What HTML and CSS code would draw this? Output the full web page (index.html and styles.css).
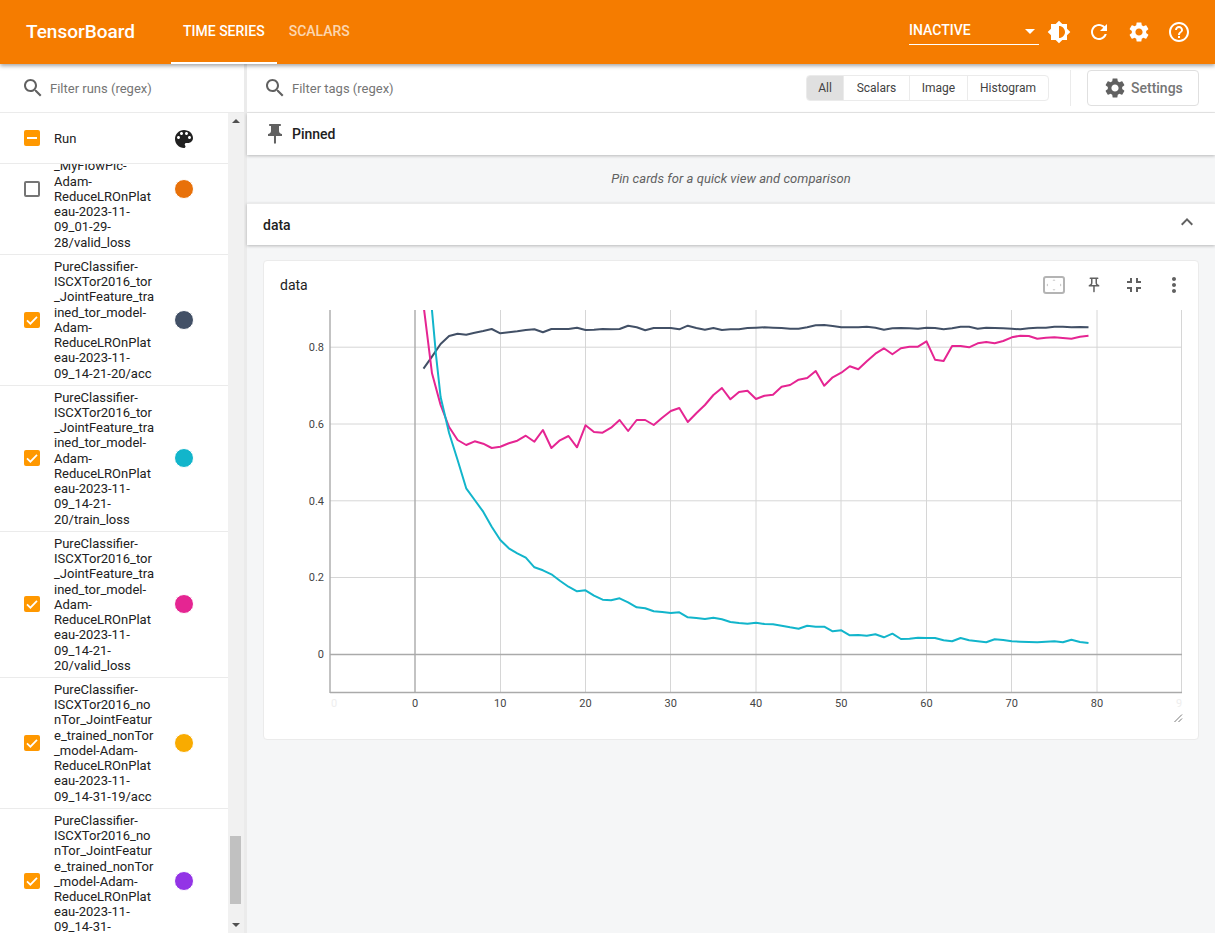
FILE: index.html
```html
<!DOCTYPE html>
<html lang="en">
<head>
<meta charset="utf-8">
<title>TensorBoard</title>
<link rel="stylesheet" href="styles.css">
</head>
<body>
<div class="app">
  <header class="topbar">
    <div class="brand">TensorBoard</div>
    <nav class="tabs">
      <div class="tab tab-active">TIME SERIES</div>
      <div class="tab">SCALARS</div>
    </nav>
    <div class="topbar-right">
      <div class="picker"><span>INACTIVE</span><i class="picker-arrow"></i></div>
      <div class="top-icon"><svg viewBox="0 0 24 24"><path d="M20 15.31L23.31 12 20 8.69V4h-4.69L12 .69 8.69 4H4v4.69L.69 12 4 15.31V20h4.69L12 23.31 15.31 20H20v-4.69zM12 18V6c3.31 0 6 2.69 6 6s-2.69 6-6 6z"/></svg></div>
      <div class="top-icon"><svg viewBox="0 0 24 24"><path d="M17.65 6.35C16.2 4.9 14.21 4 12 4c-4.42 0-7.99 3.58-7.99 8s3.57 8 7.99 8c3.73 0 6.84-2.55 7.73-6h-2.08c-.82 2.33-3.04 4-5.65 4-3.31 0-6-2.69-6-6s2.69-6 6-6c1.66 0 3.14.69 4.22 1.78L13 11h7V4l-2.35 2.35z"/></svg></div>
      <div class="top-icon"><svg viewBox="0 0 24 24"><path d="M19.14 12.94c.04-.3.06-.61.06-.94 0-.32-.02-.64-.07-.94l2.03-1.58c.18-.14.23-.41.12-.61l-1.92-3.32c-.12-.22-.37-.29-.59-.22l-2.39.96c-.5-.38-1.03-.7-1.62-.94l-.36-2.54c-.04-.24-.24-.41-.48-.41h-3.84c-.24 0-.43.17-.47.41l-.36 2.54c-.59.24-1.13.57-1.62.94l-2.39-.96c-.22-.08-.47 0-.59.22L2.74 8.87c-.12.21-.08.47.12.61l2.03 1.58c-.05.3-.09.63-.09.94s.02.64.07.94l-2.03 1.58c-.18.14-.23.41-.12.61l1.92 3.32c.12.22.37.29.59.22l2.39-.96c.5.38 1.03.7 1.62.94l.36 2.54c.05.24.24.41.48.41h3.84c.24 0 .44-.17.47-.41l.36-2.54c.59-.24 1.13-.56 1.62-.94l2.39.96c.22.08.47 0 .59-.22l1.92-3.32c.12-.22.07-.47-.12-.61l-2.01-1.58zM12 15.6c-1.98 0-3.6-1.62-3.6-3.6s1.62-3.6 3.6-3.6 3.6 1.62 3.6 3.6-1.62 3.6-3.6 3.6z"/></svg></div>
      <div class="top-icon"><svg viewBox="0 0 24 24"><path d="M11 18h2v-2h-2v2zm1-16C6.48 2 2 6.48 2 12s4.48 10 10 10 10-4.48 10-10S17.52 2 12 2zm0 18c-4.41 0-8-3.59-8-8s3.59-8 8-8 8 3.59 8 8-3.59 8-8 8zm0-14c-2.21 0-4 1.79-4 4h2c0-1.1.9-2 2-2s2 .9 2 2c0 2-3 1.75-3 5h2c0-2.25 3-2.5 3-5 0-2.21-1.79-4-4-4z"/></svg></div>
    </div>
  </header>

  <div class="body">
    <aside class="sidebar">
      <div class="filter filter-runs">
        <svg class="search-icon" viewBox="0 0 24 24"><path d="M15.5 14h-.79l-.28-.27C15.41 12.59 16 11.11 16 9.5 16 5.91 13.09 3 9.5 3S3 5.91 3 9.5 5.91 16 9.5 16c1.61 0 3.09-.59 4.23-1.57l.27.28v.79l5 4.99L20.49 19l-4.99-5zm-6 0C7.01 14 5 11.99 5 9.5S7.01 5 9.5 5 14 7.01 14 9.5 11.99 14 9.5 14z"/></svg>
        <span class="filter-text">Filter runs (regex)</span>
      </div>
      <div class="runs">
        <div class="runs-list">
          <div class="run run-head">
            <span class="check check-on"><i class="dash"></i></span>
            <span class="run-name">Run</span>
            <svg class="palette" viewBox="0 0 24 24"><path d="M12 3c-4.97 0-9 4.03-9 9s4.03 9 9 9c.83 0 1.5-.67 1.5-1.5 0-.39-.15-.74-.39-1.01-.23-.26-.38-.61-.38-.99 0-.83.67-1.5 1.5-1.5H16c2.76 0 5-2.24 5-5 0-4.42-4.03-8-9-8zm-5.5 9c-.83 0-1.5-.67-1.5-1.5S5.67 9 6.5 9 8 9.67 8 10.5 7.33 12 6.5 12zm3-4C8.67 8 8 7.33 8 6.5S8.67 5 9.5 5s1.5.67 1.5 1.5S10.33 8 9.5 8zm5 0c-.83 0-1.5-.67-1.5-1.5S13.67 5 14.5 5s1.5.67 1.5 1.5S15.33 8 14.5 8zm3 4c-.83 0-1.5-.67-1.5-1.5S16.67 9 17.5 9s1.5.67 1.5 1.5-.67 1.5-1.5 1.5z"/></svg>
          </div>
          <div class="runs-scroll">
            <div class="run run-scrolled">
              <span class="check"></span>
              <span class="run-name">PureClassifier-ISCXTor2016_tor_MyFlowPic-Adam-ReduceLROnPlateau-2023-11-09_01-29-28/valid_loss</span>
              <span class="swatch swatch-orange"></span>
            </div>
            <div class="run">
              <span class="check check-on"><svg viewBox="0 0 16 16"><path class="tick" d="M3 8.3l3.4 3.4L13 4.8"/></svg></span>
              <span class="run-name">PureClassifier-ISCXTor2016_tor_JointFeature_trained_tor_model-Adam-ReduceLROnPlateau-2023-11-09_14-21-20/acc</span>
              <span class="swatch swatch-slate"></span>
            </div>
            <div class="run">
              <span class="check check-on"><svg viewBox="0 0 16 16"><path class="tick" d="M3 8.3l3.4 3.4L13 4.8"/></svg></span>
              <span class="run-name">PureClassifier-ISCXTor2016_tor_JointFeature_trained_tor_model-Adam-ReduceLROnPlateau-2023-11-09_14-21-20/train_loss</span>
              <span class="swatch swatch-teal"></span>
            </div>
            <div class="run">
              <span class="check check-on"><svg viewBox="0 0 16 16"><path class="tick" d="M3 8.3l3.4 3.4L13 4.8"/></svg></span>
              <span class="run-name">PureClassifier-ISCXTor2016_tor_JointFeature_trained_tor_model-Adam-ReduceLROnPlateau-2023-11-09_14-21-20/valid_loss</span>
              <span class="swatch swatch-pink"></span>
            </div>
            <div class="run">
              <span class="check check-on"><svg viewBox="0 0 16 16"><path class="tick" d="M3 8.3l3.4 3.4L13 4.8"/></svg></span>
              <span class="run-name">PureClassifier-ISCXTor2016_nonTor_JointFeature_trained_nonTor_model-Adam-ReduceLROnPlateau-2023-11-09_14-31-19/acc</span>
              <span class="swatch swatch-yellow"></span>
            </div>
            <div class="run">
              <span class="check check-on"><svg viewBox="0 0 16 16"><path class="tick" d="M3 8.3l3.4 3.4L13 4.8"/></svg></span>
              <span class="run-name">PureClassifier-ISCXTor2016_nonTor_JointFeature_trained_nonTor_model-Adam-ReduceLROnPlateau-2023-11-09_14-31-19/train_loss</span>
              <span class="swatch swatch-purple"></span>
            </div>
          </div>
        </div>
        <div class="scrollbar">
          <i class="sb-up"></i>
          <div class="sb-space"></div>
          <div class="sb-thumb"></div>
          <i class="sb-down"></i>
        </div>
      </div>
    </aside>

    <main class="main">
      <div class="toolbar">
        <div class="filter filter-tags">
          <svg class="search-icon" viewBox="0 0 24 24"><path d="M15.5 14h-.79l-.28-.27C15.41 12.59 16 11.11 16 9.5 16 5.91 13.09 3 9.5 3S3 5.91 3 9.5 5.91 16 9.5 16c1.61 0 3.09-.59 4.23-1.57l.27.28v.79l5 4.99L20.49 19l-4.99-5zm-6 0C7.01 14 5 11.99 5 9.5S7.01 5 9.5 5 14 7.01 14 9.5 11.99 14 9.5 14z"/></svg>
          <span class="filter-text">Filter tags (regex)</span>
        </div>
        <div class="segments">
          <div class="segment segment-on">All</div>
          <div class="segment seg-scalars">Scalars</div>
          <div class="segment seg-image">Image</div>
          <div class="segment seg-hist">Histogram</div>
        </div>
        <div class="tool-divider"></div>
        <div class="settings-btn">
          <svg viewBox="0 0 24 24"><path d="M19.14 12.94c.04-.3.06-.61.06-.94 0-.32-.02-.64-.07-.94l2.03-1.58c.18-.14.23-.41.12-.61l-1.92-3.32c-.12-.22-.37-.29-.59-.22l-2.39.96c-.5-.38-1.03-.7-1.62-.94l-.36-2.54c-.04-.24-.24-.41-.48-.41h-3.84c-.24 0-.43.17-.47.41l-.36 2.54c-.59.24-1.13.57-1.62.94l-2.39-.96c-.22-.08-.47 0-.59.22L2.74 8.87c-.12.21-.08.47.12.61l2.03 1.58c-.05.3-.09.63-.09.94s.02.64.07.94l-2.03 1.58c-.18.14-.23.41-.12.61l1.92 3.32c.12.22.37.29.59.22l2.39-.96c.5.38 1.03.7 1.62.94l.36 2.54c.05.24.24.41.48.41h3.84c.24 0 .44-.17.47-.41l.36-2.54c.59-.24 1.13-.56 1.62-.94l2.39.96c.22.08.47 0 .59-.22l1.92-3.32c.12-.22.07-.47-.12-.61l-2.01-1.58zM12 15.6c-1.98 0-3.6-1.62-3.6-3.6s1.62-3.6 3.6-3.6 3.6 1.62 3.6 3.6-1.62 3.6-3.6 3.6z"/></svg>
          <span>Settings</span>
        </div>
      </div>

      <section class="bar bar-pinned">
        <svg class="pin-big" viewBox="0 0 24 24"><path d="M16 9V4h1c.55 0 1-.45 1-1s-.45-1-1-1H7c-.55 0-1 .45-1 1s.45 1 1 1h1v5c0 1.66-1.34 3-3 3v2h5.97v7l1 1 1-1v-7H19v-2c-1.66 0-3-1.34-3-3z"/></svg>
        <span class="bar-title">Pinned</span>
      </section>
      <div class="pin-hint">Pin cards for a quick view and comparison</div>
      <section class="bar bar-data">
        <span class="bar-title">data</span>
        <svg class="chevron" viewBox="0 0 24 24"><path d="M12 8l-6 6 1.41 1.41L12 10.83l4.59 4.58L18 14z"/></svg>
      </section>

      <article class="card">
        <div class="card-head">
          <span class="card-title">data</span>
          <div class="card-actions">
            <div class="card-btn"><svg class="fit-icon" viewBox="0 0 22 18"><rect class="fit-frame" x="1" y="1" width="20" height="16" rx="2"/><path class="fit-arrows" d="M11 3.2l1.5 1.6h-3zM11 14.8l1.5-1.6h-3zM3.4 9l1.6-1.5v3zM18.6 9L17 7.5v3z"/></svg></div>
            <div class="card-btn"><svg class="pin-small" viewBox="0 0 24 24"><path d="M14 4v5c0 1.12.37 2.16 1 3H9c.65-.86 1-1.9 1-3V4h4m3-2H7c-.55 0-1 .45-1 1s.45 1 1 1h1v5c0 1.66-1.34 3-3 3v2h5.97v7l1 1 1-1v-7H19v-2c-1.66 0-3-1.34-3-3V4h1c.55 0 1-.45 1-1s-.45-1-1-1z"/></svg></div>
            <div class="card-btn"><svg class="act-icon" viewBox="0 0 24 24"><path d="M5 16h3v3h2v-5H5v2zm3-8H5v2h5V5H8v3zm6 11h2v-3h3v-2h-5v5zm2-11V5h-2v5h5V8h-3z"/></svg></div>
            <div class="card-btn"><svg class="act-icon" viewBox="0 0 24 24"><path d="M12 8c1.1 0 2-.9 2-2s-.9-2-2-2-2 .9-2 2 .9 2 2 2zm0 2c-1.1 0-2 .9-2 2s.9 2 2 2 2-.9 2-2-.9-2-2-2zm0 6c-1.1 0-2 .9-2 2s.9 2 2 2 2-.9 2-2-.9-2-2-2z"/></svg></div>
          </div>
        </div>
        <svg class="chart" viewBox="264 306 934 433">
          <defs><clipPath id="plot"><rect x="330" y="310" width="852" height="383"/></clipPath></defs>
          <g class="grid">
            <path d="M500.5 310V693M585.5 310V693M670.5 310V693M756 310V693M841 310V693M926.5 310V693M1011.5 310V693M1097 310V693M1181.5 310V693"/>
            <path d="M330 347.2H1182M330 424H1182M330 500.8H1182M330 577.5H1182"/>
          </g>
          <g class="axis">
            <path d="M330 310V693M330 692.5H1182M415 310V693M330 654.5H1182"/>
          </g>
          <g class="ticks">
            <text class="t-y" x="324" y="351">0.8</text>
            <text class="t-y" x="324" y="428">0.6</text>
            <text class="t-y" x="324" y="505">0.4</text>
            <text class="t-y" x="324" y="581">0.2</text>
            <text class="t-y" x="324" y="658">0</text>
            <text class="t-x t-faint" x="334" y="707">0</text>
            <text class="t-x" x="415" y="707">0</text>
            <text class="t-x" x="500.3" y="707">10</text>
            <text class="t-x" x="585.5" y="707">20</text>
            <text class="t-x" x="670.8" y="707">30</text>
            <text class="t-x" x="756" y="707">40</text>
            <text class="t-x" x="841.2" y="707">50</text>
            <text class="t-x" x="926.5" y="707">60</text>
            <text class="t-x" x="1011.8" y="707">70</text>
            <text class="t-x" x="1097" y="707">80</text>
            <text class="t-x t-faint" x="1179" y="707">9</text>
          </g>
          <g clip-path="url(#plot)">
            <polyline class="line line-slate" points="423.5,368.7 432,356.7 440.6,344 449.1,336 457.6,333.7 466.2,334.7 474.7,332.7 483.2,331 491.7,329 500.3,333.3 508.8,332.3 517.3,331.3 525.8,330 534.4,329.3 542.9,332.3 551.4,329 559.9,329 568.5,329 577,327.7 585.5,330 594,329.7 602.6,329 611.1,329.3 619.6,329 628.1,325.7 636.7,327.3 645.2,330.3 653.7,328 662.2,328 670.8,328 679.3,329.3 687.8,325.7 696.3,328 704.9,329.7 713.4,328 721.9,330 730.4,329.3 739,329.3 747.5,328 756,327.7 764.5,327.3 773,327.7 781.6,328 790.1,328.7 798.6,328.7 807.2,327.3 815.7,325.3 824.2,325 832.7,326 841.3,327.3 849.8,327.3 858.3,327.3 866.8,326.7 875.4,327.7 883.9,329.7 892.4,328.3 900.9,328 909.5,328.3 918,328.7 926.5,327.7 935,328 943.6,329.3 952.1,328.3 960.6,326.7 969.1,326.7 977.7,328.7 986.2,327.7 994.7,328 1003.2,328.3 1011.8,328.7 1020.3,329.3 1028.8,328.3 1037.3,327.7 1045.9,327.7 1054.4,326.7 1062.9,326.7 1071.4,327.3 1080,327 1088.5,327.3"/>
            <polyline class="line line-pink" points="423.5,305 432,373.3 440.6,405 449.1,427 457.6,440 466.2,445 474.7,441.3 483.2,443.7 491.7,448 500.3,446.7 508.8,443.3 517.3,440.7 525.8,435.7 534.4,441.7 542.9,430 551.4,448 559.9,440.3 568.5,436 577,447.3 585.5,425.3 594,432 602.6,432.7 611.1,427.7 619.6,420 628.1,431 636.7,420 645.2,420 653.7,425 662.2,417.7 670.8,411 679.3,408 687.8,422 696.3,413.3 704.9,405 713.4,395 721.9,388 730.4,399.3 739,392 747.5,390.7 756,399 764.5,395.7 773,394.7 781.6,386.7 790.1,385 798.6,379.7 807.2,378 815.7,371 824.2,385.7 832.7,377.3 841.3,372.7 849.8,366.3 858.3,369.3 866.8,361.3 875.4,353.7 883.9,348.3 892.4,354.3 900.9,348.3 909.5,346.7 918,346.7 926.5,341.3 935,359.7 943.6,361 952.1,346 960.6,346 969.1,347.3 977.7,343.3 986.2,342 994.7,343.3 1003.2,341 1011.8,337.3 1020.3,335.7 1028.8,336 1037.3,338.7 1045.9,337.7 1054.4,337.3 1062.9,338 1071.4,338.7 1080,336.7 1088.5,335.7"/>
            <polyline class="line line-teal" points="431.5,305 436,355 440.6,397 449.1,433 457.6,460 466.2,488.3 474.7,500 483.2,511.7 491.7,526.7 500.3,540 508.8,548.3 517.3,553.3 525.8,557.7 534.4,567.3 542.9,570.3 551.4,574.3 559.9,580.7 568.5,586.7 577,591.3 585.5,590.3 594,595.7 602.6,599.7 611.1,600.3 619.6,598.3 628.1,602.3 636.7,607.3 645.2,608.3 653.7,611.3 662.2,612 670.8,613 679.3,612.3 687.8,617.3 696.3,618 704.9,619 713.4,617.7 721.9,619.3 730.4,622 739,623 747.5,623.7 756,622.7 764.5,624 773,624.3 781.6,625.7 790.1,627.3 798.6,628.7 807.2,625.7 815.7,626.7 824.2,626.7 832.7,631.3 841.3,630.3 849.8,635.3 858.3,635 866.8,635.7 875.4,634.3 883.9,637.3 892.4,633.7 900.9,639 909.5,638.7 918,637.7 926.5,638 935,638 943.6,640.3 952.1,641.3 960.6,638 969.1,640.3 977.7,641.3 986.2,642.3 994.7,639.3 1003.2,640 1011.8,641.3 1020.3,641.7 1028.8,642 1037.3,642.3 1045.9,641.8 1054.4,641.3 1062.9,642.3 1071.4,639.7 1080,642 1088.5,643"/>
          </g>
          <path class="resize" d="M1174.5 722L1182 714.5M1178.5 722L1182 718.5"/>
        </svg>
      </article>
    </main>
  </div>
</div>
</body>
</html>
```

FILE: styles.css
```css
* { box-sizing: border-box; }
html, body { margin: 0; height: 100%; overflow: hidden; }
body { font-family: Roboto, "Noto Sans", sans-serif; color: #212121; background: #fff; }
svg { display: block; }

.app { height: 933px; display: flex; flex-direction: column; }

/* top bar */
.topbar { height: 64px; flex: none; background: #f57c00; color: #fff; display: flex; align-items: stretch; padding-left: 26px; padding-right: 16px; position: relative; z-index: 3; box-shadow: 0 2px 4px rgba(0,0,0,.35); }
.brand { font-size: 19px; font-weight: 500; line-height: 64px; width: 145px; }
.tabs { display: flex; }
.tab { padding: 0 12px; font-size: 14px; font-weight: 500; line-height: 63px; color: rgba(255,255,255,.7); }
.tab-active { color: #fff; border-bottom: 2px solid #fff; }
.topbar-right { margin-left: auto; display: flex; align-items: center; }
.picker { width: 130px; height: 29px; margin-top: -4px; border-bottom: 1px solid #fff; display: flex; align-items: center; justify-content: space-between; font-size: 14px; font-weight: 500; padding: 1px 4px 0 0; }
.picker-arrow { width: 0; height: 0; border-left: 5px solid transparent; border-right: 5px solid transparent; border-top: 5px solid #fff; margin-top: 3px; }
.top-icon { width: 40px; height: 40px; display: flex; align-items: center; justify-content: center; }
.top-icon svg { width: 24px; height: 24px; fill: #fff; }

.body { flex: 1; min-height: 0; display: flex; }

/* sidebar */
.sidebar { width: 244px; flex: none; display: flex; flex-direction: column; background: #fff; }
.filter { height: 49px; flex: none; display: flex; align-items: center; border-bottom: 1px solid #ebebeb; }
.filter-runs { padding-left: 21px; }
.search-icon { width: 24px; height: 24px; fill: #616161; margin-right: 5px; flex: none; }
.filter-text { font-size: 13px; color: #757575; }
.runs { flex: 1; min-height: 0; display: flex; }
.runs-list { width: 228px; display: flex; flex-direction: column; min-height: 0; }
.run-head { height: 51px; flex: none; line-height: normal; }
.runs-scroll { flex: 1; min-height: 0; overflow: hidden; }
.run { display: flex; align-items: center; padding: 4px 0 4px 24px; border-bottom: 1px solid #ebebeb; font-size: 13px; line-height: 15.23px; }
.run-head.run { line-height: 17px; }
.run-scrolled { margin-top: -40px; }
.check { width: 16px; height: 16px; border: 2px solid #757575; border-radius: 2px; flex: none; display: flex; align-items: center; justify-content: center; margin-right: 14px; }
.check-on { background: #ff9800; border: 0; }
.check-on svg { width: 16px; height: 16px; }
.tick { fill: none; stroke: #fff; stroke-width: 1.7; }
.dash { width: 10px; height: 2px; background: #fff; }
.run-name { width: 102px; flex: none; overflow-wrap: anywhere; }
.palette { width: 24px; height: 24px; fill: #212121; margin: 1px 0 0 16px; }
.swatch { width: 20px; height: 20px; border: 1px solid #fff; border-radius: 50%; margin-left: 18px; flex: none; }
.swatch-orange { background: #e8710a; }
.swatch-slate { background: #425066; }
.swatch-teal { background: #12b5cb; }
.swatch-pink { background: #e52592; }
.swatch-yellow { background: #f9ab00; }
.swatch-purple { background: #9334e6; }

/* fake scrollbar */
.scrollbar { width: 16px; flex: none; background: #f1f1f1; display: flex; flex-direction: column; align-items: center; padding: 6px 0; }
.sb-up { width: 0; height: 0; border-left: 4px solid transparent; border-right: 4px solid transparent; border-bottom: 4px solid #505050; }
.sb-down { width: 0; height: 0; border-left: 4px solid transparent; border-right: 4px solid transparent; border-top: 4px solid #505050; margin-top: 19px; }
.sb-space { flex: 1; }
.sb-thumb { width: 11px; height: 68px; margin-right: 1px; background: #c1c1c1; }

/* main */
.main { flex: 1; min-width: 0; margin-left: 3px; background: #f5f6f7; display: flex; flex-direction: column; box-shadow: -3px 0 0 #ebebeb; }
.toolbar { height: 49px; flex: none; background: #fff; border-bottom: 1px solid #ebebeb; display: flex; align-items: center; padding-right: 16px; }
.filter-tags { flex: 1; height: 48px; border: 0; padding-left: 16px; }
.segments { display: flex; height: 26px; border: 1px solid #ebebeb; border-radius: 4px; overflow: hidden; font-size: 12px; }
.segment { display: flex; align-items: center; justify-content: center; border-left: 1px solid #ebebeb; color: #424242; }
.segment-on { width: 36px; background: #e0e0e0; border-left: 0; }
.seg-scalars { width: 66px; }
.seg-image { width: 58px; }
.seg-hist { width: 81px; }
.tool-divider { width: 1px; height: 36px; background: #ebebeb; margin: 0 16px 0 21px; }
.settings-btn { width: 112px; height: 36px; border: 1px solid #e0e0e0; border-radius: 4px; display: flex; align-items: center; padding-left: 15px; font-size: 14px; font-weight: 500; color: #757575; }
.settings-btn svg { width: 24px; height: 24px; fill: #616161; margin-right: 4px; }

.bar { background: #fff; display: flex; align-items: center; flex: none; box-shadow: 0 1px 3px rgba(0,0,0,.25); }
.bar-pinned { height: 42px; padding-left: 16px; }
.pin-big { width: 24px; height: 24px; fill: #616161; margin-right: 5px; }
.bar-title { font-size: 14px; font-weight: 500; color: #212121; }
.pin-hint { height: 48px; flex: none; display: flex; align-items: center; justify-content: center; padding-bottom: 2px; font-size: 13px; letter-spacing: .05px; font-style: italic; color: #616161; }
.bar-data { height: 42px; padding: 0 16px; justify-content: space-between; border-top: 1px solid #ebebeb; }
.chevron { width: 24px; height: 24px; fill: #616161; margin-top: -5px; }

.card { margin: 15px 16px 0; height: 480px; background: #fff; border: 1px solid #ebebeb; border-radius: 4px; flex: none; }
.card-head { height: 45px; display: flex; align-items: center; justify-content: space-between; padding: 0 4px 0 16px; }
.card-title { font-size: 14px; color: #212121; margin-top: 3px; }
.card-actions { display: flex; margin-top: 3px; }
.card-btn { width: 40px; height: 40px; display: flex; align-items: center; justify-content: center; }
.fit-icon { width: 22px; height: 18px; }
.fit-frame { fill: none; stroke: #b4b4b4; stroke-width: 2; }
.fit-arrows { fill: #c8c8c8; }
.pin-small { width: 18px; height: 18px; fill: #616161; }
.act-icon { width: 24px; height: 24px; fill: #616161; }

/* chart */
.chart { width: 934px; height: 433px; font-size: 11px; }
.grid path { fill: none; stroke: #d6d6d6; stroke-width: 1; }
.axis path { fill: none; stroke: #aaa; stroke-width: 1.4; }
.ticks text { fill: #444; font-family: Roboto, sans-serif; }
.t-y { text-anchor: end; }
.t-x { text-anchor: middle; }
.ticks .t-faint { fill: #eee; }
.line { fill: none; stroke-width: 2; stroke-linejoin: round; }
.line-slate { stroke: #425066; }
.line-pink { stroke: #e52592; }
.line-teal { stroke: #12b5cb; }
.resize { fill: none; stroke: #555; stroke-width: .8; }
```
